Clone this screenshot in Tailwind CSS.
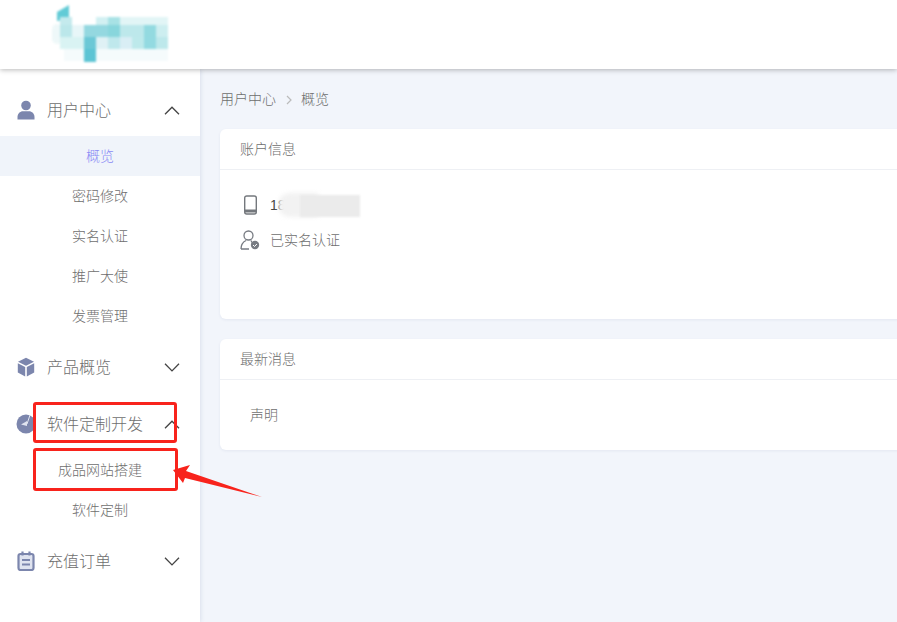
<!DOCTYPE html>
<html lang="zh-CN">
<head>
  <meta charset="UTF-8" />
  <title>概览</title>
  <script src="https://cdn.jsdelivr.net/npm/@tailwindcss/browser@4"></script>
</head>
<body class="relative w-[897px] h-[622px] overflow-hidden flex flex-col bg-[#f2f5fb] text-[#6e6e6e] font-['Liberation_Sans','Noto_Sans_CJK_SC',sans-serif]">

<!-- 顶部 -->
<header class="relative z-20 h-[69px] shrink-0 bg-white shadow-[0_1px_5px_rgba(0,0,0,0.28)] pl-[50px] pt-[5px]">
  <svg class="w-[125px] h-[60px] blur-[1px]" viewBox="50 5 125 60" aria-hidden="true">
    <polygon points="57,12 69,5 69,19 57,21" fill="#62cbd6"/>
    <rect x="52" y="24" width="10" height="20" rx="5" fill="#eef8f9"/>
    <rect x="64" y="49" width="104" height="12" fill="#f5fbfc"/>
    <rect x="60" y="17" width="12" height="8" fill="#c4eaed"/>
    <rect x="96" y="17" width="12" height="8" fill="#d2f0f2"/>
    <rect x="108" y="17" width="12" height="8" fill="#a8e2e5"/>
    <rect x="120" y="17" width="48" height="8" fill="#e2f5f6"/>
    <rect x="60" y="25" width="12" height="12" fill="#bbe7ea"/>
    <rect x="72" y="25" width="12" height="12" fill="#e8f6f8"/>
    <rect x="84" y="25" width="24" height="12" fill="#94d8e0"/>
    <rect x="108" y="25" width="12" height="12" fill="#88d6dc"/>
    <rect x="120" y="25" width="24" height="12" fill="#bde8eb"/>
    <rect x="144" y="25" width="12" height="12" fill="#93dae0"/>
    <rect x="156" y="25" width="12" height="12" fill="#cdeef0"/>
    <rect x="60" y="37" width="24" height="12" fill="#d9f3f3"/>
    <rect x="84" y="37" width="12" height="12" fill="#6cc8d6"/>
    <rect x="96" y="37" width="12" height="12" fill="#dff1f5"/>
    <rect x="108" y="37" width="12" height="12" fill="#bfe8ec"/>
    <rect x="120" y="37" width="12" height="12" fill="#d9eef5"/>
    <rect x="132" y="37" width="12" height="12" fill="#bde9eb"/>
    <rect x="144" y="37" width="12" height="12" fill="#93dae1"/>
    <rect x="156" y="37" width="12" height="12" fill="#bde8eb"/>
    <rect x="84" y="49" width="12" height="13" fill="#5cc4d4"/>
  </svg>
</header>

<div class="flex flex-1 min-h-0">
  <!-- 侧边栏 -->
  <aside class="relative z-10 w-[200px] shrink-0 bg-white shadow-[1px_0_4px_rgba(60,80,130,0.12)] pt-[15px] flex flex-col gap-[5px]">
    <div>
      <div class="h-[52px] flex items-center pl-[16px] pr-[20px]">
        <svg class="w-[20px] h-[20px] text-[#7c86ad]" viewBox="0 0 20 20" fill="currentColor"><circle cx="10" cy="5.500" r="4.800"/><path d="M1.500 19.500v-2.500c0-3.600 2.600-5.800 5.500-5.800h6c2.900 0 5.500 2.200 5.500 5.800v2.500z"/></svg>
        <span class="ml-[11px] pt-[2px] flex-1 text-[16px] font-light">用户中心</span>
        <svg class="w-[16px] h-[9px] text-[#444]" viewBox="0 0 16 9" fill="none" stroke="currentColor" stroke-width="1.300"><path d="M1 8.300 8 1.200l7 7.100"/></svg>
      </div>
      <ul class="text-[14px] font-light text-center">
        <li class="h-[40px] leading-[40px] bg-[#f0f4fa] text-[#8b8bf5]">概览</li>
        <li class="h-[40px] leading-[40px]">密码修改</li>
        <li class="h-[40px] leading-[40px]">实名认证</li>
        <li class="h-[40px] leading-[40px]">推广大使</li>
        <li class="h-[40px] leading-[40px]">发票管理</li>
      </ul>
    </div>

    <div class="h-[52px] flex items-center pl-[16px] pr-[20px]">
      <svg class="w-[20px] h-[20px] text-[#7c86ad]" viewBox="0 0 20 20" fill="currentColor"><path d="M10 .8 18 4.700 10 8.700 2 4.700z"/><path d="M1.800 6.200 9.200 10v9.500l-7.400-3.900z"/><path d="M18.200 6.200 10.800 10v9.500l7.400-3.900z"/></svg>
      <span class="ml-[11px] pt-[2px] flex-1 text-[16px] font-light">产品概览</span>
      <svg class="w-[16px] h-[9px] text-[#444]" viewBox="0 0 16 9" fill="none" stroke="currentColor" stroke-width="1.300"><path d="M1 .8 8 7.900 15 .8"/></svg>
    </div>

    <div>
      <div class="h-[52px] flex items-center pl-[16px] pr-[20px]">
        <svg class="w-[20px] h-[20px] text-[#7c86ad]" viewBox="0 0 20 20" fill="currentColor"><circle cx="10" cy="10" r="9.500"/><path d="M11 10 14 1" fill="none" stroke="#e4e7f1" stroke-width="1"/><path d="M5 10.500 11 7v5z" fill="#dfe3ef"/></svg>
        <span class="ml-[11px] pt-[2px] flex-1 text-[16px] font-light">软件定制开发</span>
        <svg class="w-[16px] h-[9px] text-[#444]" viewBox="0 0 16 9" fill="none" stroke="currentColor" stroke-width="1.300"><path d="M1 8.300 8 1.200l7 7.100"/></svg>
      </div>
      <ul class="text-[14px] font-light text-center">
        <li class="h-[40px] leading-[40px]">成品网站搭建</li>
        <li class="h-[40px] leading-[40px]">软件定制</li>
      </ul>
    </div>

    <div class="h-[52px] flex items-center pl-[16px] pr-[20px]">
      <svg class="w-[20px] h-[20px] text-[#7c86ad]" viewBox="0 0 20 20" fill="#dfe3ef" stroke="currentColor" stroke-width="2.200"><rect x="2.500" y="3" width="15" height="16" rx="2"/><path d="M6.500 .5v4M13.500 .5v4M6 9h8M6 13.500h8" fill="none"/></svg>
      <span class="ml-[11px] pt-[2px] flex-1 text-[16px] font-light">充值订单</span>
      <svg class="w-[16px] h-[9px] text-[#444]" viewBox="0 0 16 9" fill="none" stroke="currentColor" stroke-width="1.300"><path d="M1 .8 8 7.900 15 .8"/></svg>
    </div>
  </aside>

  <!-- 内容 -->
  <main class="flex-1 min-w-0 pl-[20px] overflow-hidden">
    <div class="h-[60px] flex items-center text-[14px] font-light pt-[1px]">
      <span>用户中心</span>
      <svg class="w-[8px] h-[10px] mx-[8.500px] text-[#bbb]" viewBox="0 0 8 10" fill="none" stroke="currentColor" stroke-width="1.200"><path d="M2 1l4 4-4 4"/></svg>
      <span>概览</span>
    </div>

    <section class="w-[720px] h-[190px] bg-white rounded-[6px] shadow-[0_1px_3px_rgba(60,80,130,0.08)] text-[14px] font-light">
      <h2 class="h-[41px] leading-[40px] pl-[20px] border-b border-[#eef0f4] font-light">账户信息</h2>
      <div class="pl-[20px] pt-[23px] flex flex-col gap-[11px]">
        <div class="relative flex items-center h-[24px]">
          <svg class="w-[20px] h-[20px] text-[#74787d]" viewBox="0 0 20 20" fill="none" stroke="currentColor" stroke-width="1.400"><rect x="4.700" y="1" width="11.600" height="18" rx="2"/><path d="M5 16h11" stroke-width="3"/></svg>
          <span class="ml-[10px] font-normal text-[#444]">18</span>
          <!-- 打码 -->
          <div class="absolute left-[38px] top-0 w-[40px] h-[24px] rounded-l-[14px] bg-[#f2f2f2] blur-[2px]"></div>
          <div class="absolute left-[60px] top-[2px] w-[60px] h-[22px] bg-[#ebebeb] blur-[1px]"></div>
        </div>
        <div class="flex items-center h-[24px]">
          <svg class="w-[20px] h-[20px] text-[#777b82]" viewBox="0 0 20 20" fill="none" stroke="currentColor" stroke-width="1.300"><circle cx="8.500" cy="5.500" r="4.500"/><path d="M1 19c0-4 2-7 5-8.500M11 10.500l1 2M1 19h8"/><circle cx="15" cy="15" r="4.200" fill="currentColor" stroke="none"/><path d="M13 15l1.500 1.500 2.400-2.500" stroke="#fff" stroke-width="1"/></svg>
          <span class="ml-[10px]">已实名认证</span>
        </div>
      </div>
    </section>

    <section class="w-[720px] h-[111px] mt-[20px] bg-white rounded-[6px] shadow-[0_1px_3px_rgba(60,80,130,0.08)] text-[14px] font-light">
      <h2 class="h-[41px] leading-[40px] pl-[20px] border-b border-[#eef0f4] font-light">最新消息</h2>
      <p class="pl-[30px] pt-[25px] leading-[20px]">声明</p>
    </section>
  </main>
</div>

<!-- 截图标注 -->
<div class="absolute z-30 left-[33px] top-[402px] w-[144px] h-[41px] border-[3px] border-[#f8231c] rounded-[3px]"></div>
<div class="absolute z-30 left-[33px] top-[448px] w-[145px] h-[43px] border-[3px] border-[#f8231c] rounded-[3px]"></div>
<svg class="absolute z-30 left-0 top-0 w-[897px] h-[622px] pointer-events-none" viewBox="0 0 897 622"><polygon points="173,470 190,465 186,471 262,497 185,478 183,483" fill="#f8231c"/></svg>
</body>
</html>
